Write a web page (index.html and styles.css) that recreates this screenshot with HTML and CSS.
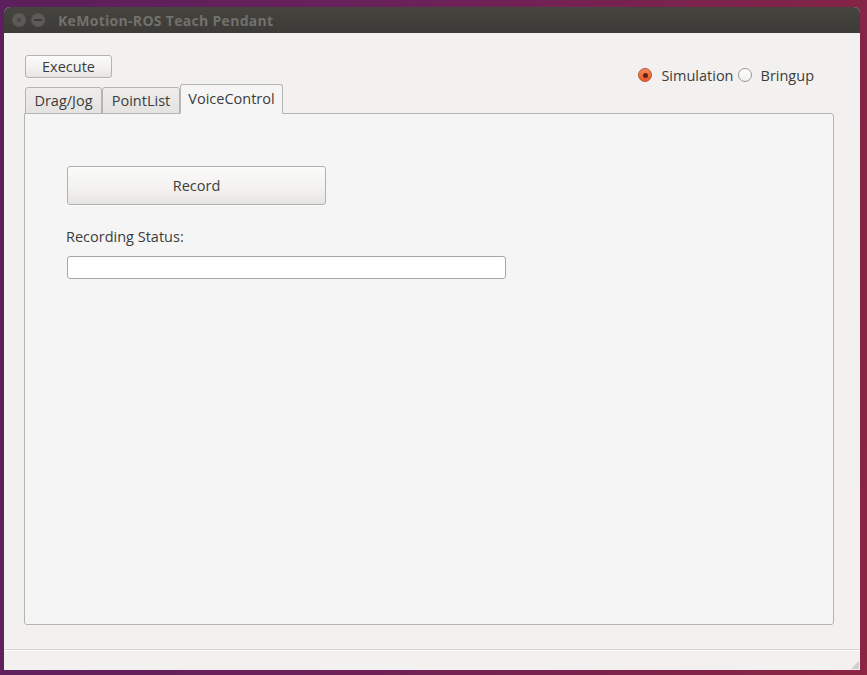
FILE: index.html
```html
<!DOCTYPE html>
<html>
<head>
<meta charset="utf-8">
<link rel="stylesheet" href="styles.css">
</head>
<body>
<div class="window">
  <div class="titlebar">
    <span class="wbtn close">&#x2715;</span>
    <span class="wbtn min"></span>
    <span class="title">KeMotion-ROS Teach Pendant</span>
  </div>
  <div class="content">
    <div class="header">
      <button class="btn exec">Execute</button>
      <div class="radios">
        <label class="radio"><span class="dot on"></span>Simulation</label>
        <label class="radio"><span class="dot"></span>Bringup</label>
      </div>
    </div>
    <div class="tabs">
      <div class="tab t1">Drag/Jog</div>
      <div class="tab t2">PointList</div>
      <div class="tab active t3">VoiceControl</div>
    </div>
    <div class="pane">
      <button class="btn record">Record</button>
      <div class="label">Recording Status:</div>
      <div class="input"></div>
    </div>
  </div>
  <div class="statusbar"><span class="grip"></span></div>
</div>
</body>
</html>
```
FILE: styles.css
```css
html, body {
  margin: 0;
  padding: 0;
  width: 867px;
  height: 675px;
  overflow: hidden;
}
body {
  background: linear-gradient(100deg, #5a1f5c 0%, #6a215a 40%, #7f2349 80%, #8c2642 100%);
  font-family: "Open Sans", "DejaVu Sans", sans-serif;
  font-size: 14.5px;
  color: #3c3c3c;
}
.window {
  margin: 7px 0 0 4px;
  width: 856px;
  height: 663px;
  background: #f2f1f0;
  border-radius: 6px 6px 0 0;
  display: flex;
  flex-direction: column;
}
.titlebar {
  height: 26px;
  flex: none;
  background: linear-gradient(#45443f, #3c3b37);
  border-radius: 6px 6px 0 0;
  display: flex;
  align-items: center;
  padding-left: 8px;
}
.wbtn {
  width: 14px;
  height: 14px;
  border-radius: 50%;
  background: #5c5b57;
  box-shadow: inset 0 0 0 1px #545350;
  margin-right: 5px;
  display: flex;
  align-items: center;
  justify-content: center;
  color: #3c3b37;
  font-size: 8px;
  font-weight: bold;
  line-height: 1;
}
.wbtn.min::after {
  content: "";
  width: 8px;
  height: 2px;
  background: #3c3b37;
}
.title {
  margin-left: 8px;
  font-family: "Open Sans", "DejaVu Sans", sans-serif;
  font-weight: bold;
  font-size: 14px;
  color: #72716c;
  letter-spacing: 0.3px;
}
.content {
  flex: 1;
  padding: 22px 26px 0 20px;
  display: flex;
  flex-direction: column;
}
.header {
  height: 30px;
  display: flex;
  justify-content: space-between;
  align-items: flex-start;
}
.btn {
  font-family: inherit;
  font-size: 14.5px;
  color: #3c3c3c;
  border: 1px solid #b4b2ae;
  border-radius: 3px;
  background: linear-gradient(#fbfbfa, #f2f1f0 60%, #e6e5e3);
  padding: 0;
  box-shadow: 0 1px 0 rgba(255,255,255,0.6);
}
.exec {
  margin-left: 1px;
  width: 87px;
  height: 23px;
}
.radios {
  display: flex;
  align-items: center;
  margin-top: 10px;
  margin-right: 20px;
}
.radio {
  display: flex;
  align-items: center;
  height: 20px;
}
.radio + .radio {
  margin-left: 4px;
}
.dot {
  width: 12px;
  height: 12px;
  border-radius: 50%;
  border: 1px solid #9a9894;
  background: linear-gradient(#ffffff, #f0efee);
  margin-right: 9px;
  box-sizing: content-box;
  display: flex;
  align-items: center;
  justify-content: center;
}
.dot.on {
  border-color: #c2522b;
  background: linear-gradient(#f28a5e, #e4592b);
}
.dot.on::after {
  content: "";
  width: 5px;
  height: 5px;
  border-radius: 50%;
  background: #5c2414;
}
.tabs {
  display: flex;
  align-items: flex-end;
  padding-left: 1px;
  height: 29px;
  position: relative;
  z-index: 1;
  margin-bottom: -1px;
}
.tab {
  border: 1px solid #b6b4b0;
  border-radius: 3px 3px 0 0;
  background: linear-gradient(#eeedeb, #e4e3e1);
  display: flex;
  align-items: center;
  justify-content: center;
  box-sizing: border-box;
  height: 27px;
}
.t1 { width: 77px; }
.t2 { width: 78px; }
.t3 { width: 103px; }
.tab.active {
  height: 30px;
  background: #f5f5f5;
  border-bottom-color: #f5f5f5;
  padding-bottom: 1px;
}
.pane {
  height: 512px;
  box-sizing: border-box;
  border: 1px solid #b6b4b0;
  border-radius: 0 3px 3px 3px;
  background: #f5f5f5;
  padding: 52px 0 0 42px;
  display: flex;
  flex-direction: column;
  align-items: flex-start;
}
.record {
  width: 259px;
  height: 39px;
}
.label {
  margin-top: 22px;
  margin-left: -1px;
  line-height: 20px;
}
.input {
  margin-top: 9px;
  width: 439px;
  height: 23px;
  box-sizing: border-box;
  border: 1px solid #a9a7a3;
  border-radius: 3px;
  background: #ffffff;
}
.statusbar {
  margin-top: auto;
  height: 20px;
  border-top: 1px solid #d6d5d1;
  box-shadow: inset 0 1px 0 #ffffff;
  position: relative;
}
.grip {
  position: absolute;
  right: 1px;
  bottom: 1px;
  width: 8px;
  height: 8px;
  background: radial-gradient(circle, #d0cfcb 0.8px, transparent 1px) 0 0 / 2px 2px;
  clip-path: polygon(100% 0, 100% 100%, 0 100%);
}
```
